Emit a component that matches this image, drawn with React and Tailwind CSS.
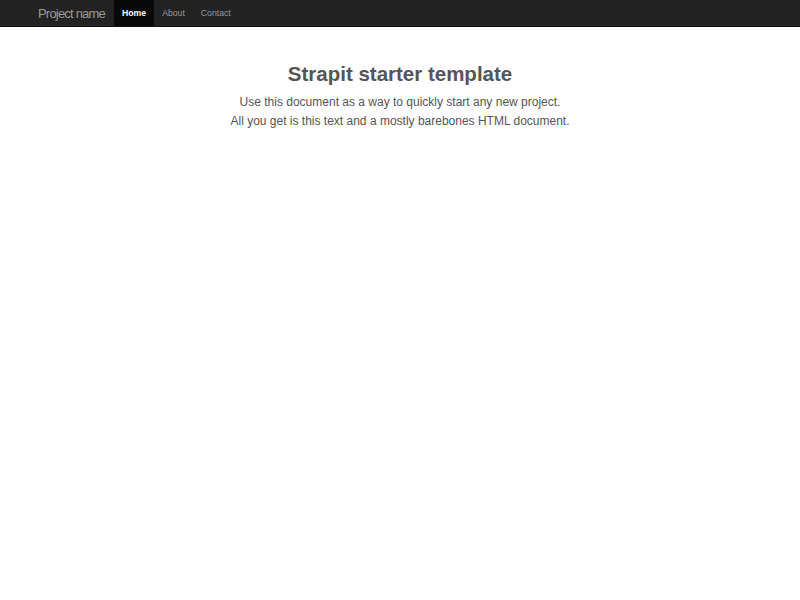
export default function App() {
  const font = { fontFamily: '"Liberation Sans", Arial, sans-serif' };
  return (
    <div className="min-h-[600px] bg-white" style={font}>
      <div className="h-[27px] bg-[#222222] border-b border-[#111111] flex items-stretch pl-[38px]">
        <div className="flex items-center pt-[1px] text-[13px] tracking-[-0.8px] text-[#999999] mr-[9px]">Project name</div>
        <div className="flex items-stretch text-[8.7px]">
          <div className="flex items-center pt-[1px] px-[8px] bg-[#080808] text-white font-bold">Home</div>
          <div className="flex items-center pt-[1px] px-[8px] text-[#999999]">About</div>
          <div className="flex items-center pt-[1px] px-[8px] text-[#999999]">Contact</div>
        </div>
      </div>
      <div className="flex flex-col items-center pt-[33px] text-[#555555]">
        <h1 className="text-[20.5px] leading-[28px] font-bold">Strapit starter template</h1>
        <p className="text-[12px] leading-[19px] mt-[5px]">Use this document as a way to quickly start any new project.</p>
        <p className="text-[12px] leading-[19px]">All you get is this text and a mostly barebones HTML document.</p>
      </div>
    </div>
  );
}
